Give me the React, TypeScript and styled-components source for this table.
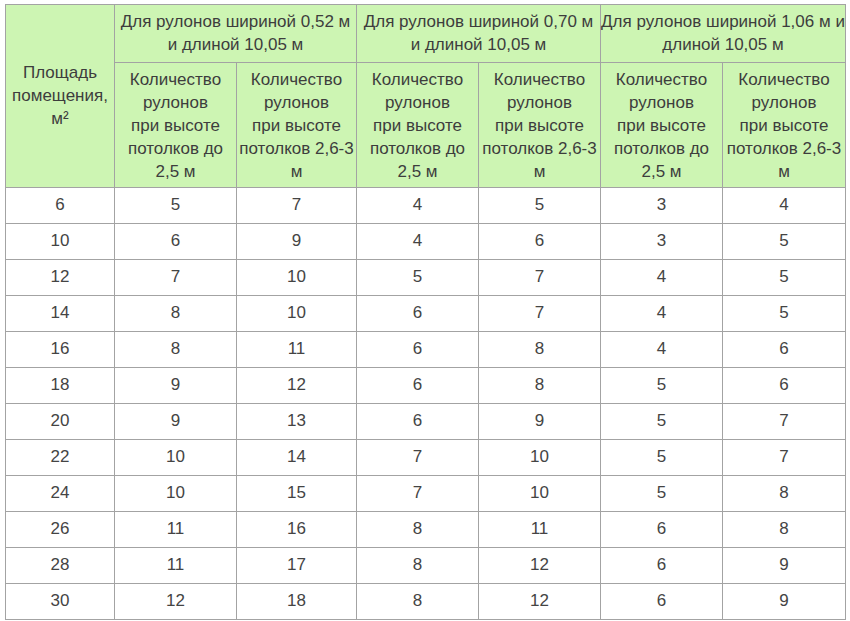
import React from 'react';
import styled, { createGlobalStyle } from 'styled-components';

const GlobalStyle = createGlobalStyle`
  body {
    margin: 0;
    background: #ffffff;
    font-family: "Liberation Sans", Arial, sans-serif;
  }
`;

const Wrapper = styled.div`
  padding: 4px 0 0 5px;
`;

const Table = styled.table`
  border-collapse: collapse;
  table-layout: fixed;
  width: 840px;
  border: 1px solid #4a4a4a;
  font-size: 17px;
  color: #444444;
`;

const HeadCell = styled.th<{ $tall?: boolean }>`
  background: #cdf5b3;
  border: 1px solid #a3a3a3;
  font-weight: normal;
  text-align: center;
  vertical-align: middle;
  line-height: 23px;
  padding: ${(p) => (p.$tall ? '5px 1px 4px' : '5px 0 6px')};
  color: #3d3d3d;
`;

const Line = styled.span`
  white-space: nowrap;
`;

const Cell = styled.td`
  border: 1px solid #a3a3a3;
  text-align: center;
  vertical-align: middle;
  height: 33px;
  padding: 0 0 2px;
  line-height: 20px;
`;

const widths = [109, 122, 120, 122, 122, 122, 123];

const groups: [string, string][] = [
  ['Для рулонов шириной 0,52 м', 'и длиной 10,05 м'],
  ['Для рулонов шириной 0,70 м', 'и длиной 10,05 м'],
  ['Для рулонов шириной 1,06 м и', 'длиной 10,05 м'],
];

const rows: number[][] = [
  [6, 5, 7, 4, 5, 3, 4],
  [10, 6, 9, 4, 6, 3, 5],
  [12, 7, 10, 5, 7, 4, 5],
  [14, 8, 10, 6, 7, 4, 5],
  [16, 8, 11, 6, 8, 4, 6],
  [18, 9, 12, 6, 8, 5, 6],
  [20, 9, 13, 6, 9, 5, 7],
  [22, 10, 14, 7, 10, 5, 7],
  [24, 10, 15, 7, 10, 5, 8],
  [26, 11, 16, 8, 11, 6, 8],
  [28, 11, 17, 8, 12, 6, 9],
  [30, 12, 18, 8, 12, 6, 9],
];

const App: React.FC = () => {
  return (
    <Wrapper>
      <GlobalStyle />
      <Table>
        <colgroup>
          {widths.map((w, i) => (
            <col key={i} style={{ width: w }} />
          ))}
        </colgroup>
        <thead>
          <tr>
            <HeadCell rowSpan={2}>Площадь помещения, м²</HeadCell>
            {groups.map(([a, b]) => (
              <HeadCell key={a} colSpan={2}>
                <Line>{a}</Line>
                <br />
                <Line>{b}</Line>
              </HeadCell>
            ))}
          </tr>
          <tr>
            {groups.map(([a]) => (
              <React.Fragment key={a}>
                <HeadCell $tall>
                  Количество рулонов
                  <br />
                  при высоте потолков до 2,5 м
                </HeadCell>
                <HeadCell $tall>
                  Количество рулонов
                  <br />
                  при высоте потолков 2,6-3 м
                </HeadCell>
              </React.Fragment>
            ))}
          </tr>
        </thead>
        <tbody>
          {rows.map((r) => (
            <tr key={r[0]}>
              {r.map((v, i) => (
                <Cell key={i}>{v}</Cell>
              ))}
            </tr>
          ))}
        </tbody>
      </Table>
    </Wrapper>
  );
};

export default App;
